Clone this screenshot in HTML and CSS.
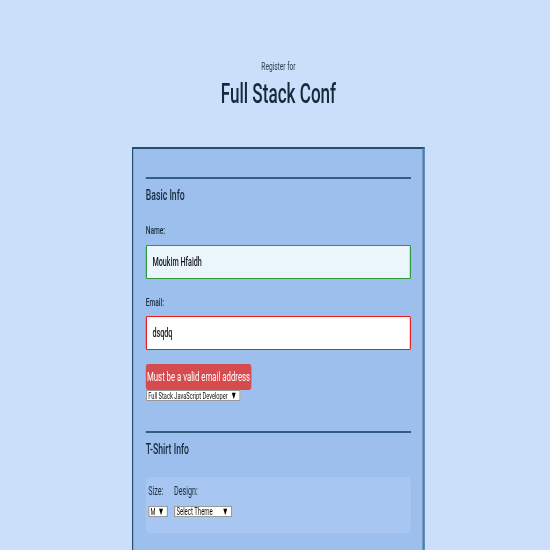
FILE: index.html
```html
<!DOCTYPE html>
<html lang="en">
<head>
<meta charset="utf-8">
<title>Full Stack Conf</title>
<link rel="stylesheet" href="styles.css">
</head>
<body>
<div class="viewport">
  <div class="page">
    <header class="header">
      <p class="kicker">Register for</p>
      <h1 class="title">Full Stack Conf</h1>
    </header>
    <form class="form">
      <hr class="rule">
      <h2 class="legend">Basic Info</h2>
      <label class="label label-name" for="name">Name:</label>
      <input class="field field-valid" id="name" type="text" value="Moukim Hfaidh">
      <label class="label label-mail" for="mail">Email:</label>
      <input class="field field-invalid" id="mail" type="email" value="dsqdq" autofocus>
      <p class="error">Must be a valid email address</p>
      <span class="select select-role">
        <select class="select-input"><option>Full Stack JavaScript Developer</option></select>
        <span class="select-arrow">▼</span>
      </span>
      <hr class="rule rule-second">
      <h2 class="legend">T-Shirt Info</h2>
      <div class="shirt">
        <div class="shirt-col shirt-size">
          <label class="label label-small">Size:</label>
          <span class="select select-size">
            <select class="select-input"><option>M</option></select>
            <span class="select-arrow">▼</span>
          </span>
        </div>
        <div class="shirt-col">
          <label class="label label-small">Design:</label>
          <span class="select select-design">
            <select class="select-input"><option>Select Theme</option></select>
            <span class="select-arrow">▼</span>
          </span>
        </div>
      </div>
    </form>
  </div>
</div>
</body>
</html>
```

FILE: styles.css
```css
* { box-sizing: border-box; }

html, body {
  margin: 0;
  padding: 0;
  background: #cbdffa;
}

.viewport {
  width: 550px;
  height: 550px;
  overflow: hidden;
}

/* the reference is horizontally compressed; lay out wide and squeeze */
.page {
  width: 917px;
  padding-top: 60px;
  transform: scaleX(0.6);
  transform-origin: 0 0;
  font-family: "Roboto", "Liberation Sans", sans-serif;
  color: #1c3040;
}

.header {
  margin-left: 220px;
  width: 488px;
  text-align: center;
}

.kicker {
  margin: 0;
  font-size: 11px;
  line-height: 14px;
  color: #2e3e4c;
}

.title {
  margin: 3px 0 0;
  font-size: 28.5px;
  line-height: 34px;
  font-weight: 500;
  color: #142b3c;
}

.form {
  margin: 36px 0 0 220px;
  width: 488px;
  height: 420px;
  padding: 28px 19px 0 21px;
  background: #9dbfee;
  border-style: solid;
  border-width: 2px 4px 0 2px;
  border-color: #24506f #4f81aa #24506f #24506f;
  display: flex;
  flex-direction: column;
  align-items: flex-start;
}

.rule {
  margin: 0;
  width: 100%;
  height: 2px;
  border: 0;
  background: #2f5e80;
}

.rule-second { margin-top: 30px; }

.legend {
  margin: 7px 0 0;
  font-size: 14.5px;
  line-height: 20px;
  font-weight: 500;
  color: #152939;
}

.label {
  display: block;
  font-size: 11px;
  line-height: 14px;
  font-weight: 500;
  color: #1a2c3b;
}

.label-name { margin-top: 18px; }
.label-mail { margin-top: 17px; }

.field {
  width: 100%;
  height: 34px;
  margin-top: 7px;
  padding: 0 9px;
  font-family: "Roboto", "Liberation Sans", sans-serif;
  font-size: 12px;
  font-weight: 500;
  color: #141414;
  border: 1px solid;
  border-radius: 2px;
  outline: none;
  caret-color: #000;
}

.field-valid {
  background: #eaf6fb;
  border-color: #2c9a36;
  border-width: 1px 2px;
}

.field-invalid {
  margin-top: 6px;
  background: #ffffff;
  border-color: #f01b1b;
  border-width: 1px 2px;
}

.error {
  margin: 14px 0 0;
  height: 26px;
  padding: 0 2px;
  font-size: 13px;
  line-height: 26px;
  color: #ffffff;
  background: #d64b4d;
  border-radius: 4px;
}

.select {
  display: inline-flex;
  align-items: center;
  height: 11px;
  background: #ffffff;
  border: 1px solid #9a9a9a;
  border-width: 1px 2px;
}

.select-input {
  appearance: none;
  -webkit-appearance: none;
  flex: 1;
  min-width: 0;
  height: 9px;
  margin: 0;
  padding: 0 1px 0 2px;
  border: 0;
  background: transparent;
  font-family: "Roboto", "Liberation Sans", sans-serif;
  font-size: 9.5px;
  line-height: 9px;
  color: #111;
}

.select-arrow {
  font-size: 11px;
  line-height: 9px;
  padding: 0 4px 0 1px;
  color: #000;
}

.select-role { width: 158px; }
.select-size { width: 33px; }
.select-design { width: 97px; }

.select-design .select-input { font-size: 10px; }

.shirt {
  margin-top: 17px;
  width: 100%;
  height: 56px;
  padding: 6px 4px 0;
  background: #a7c6f1;
  border-radius: 6px;
  display: flex;
  gap: 10px;
}

.shirt-col {
  display: flex;
  flex-direction: column;
  gap: 7px;
  align-items: flex-start;
}

.shirt-size { width: 33px; }

.label-small {
  font-size: 12px;
  line-height: 16px;
  font-weight: 400;
}
```
